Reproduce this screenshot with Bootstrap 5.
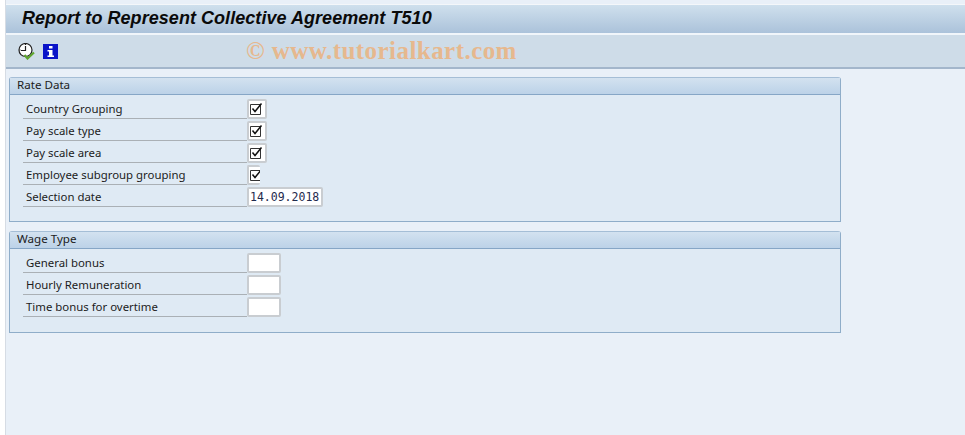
<!DOCTYPE html>
<html lang="en">
<head>
  <meta charset="UTF-8">
  <meta name="viewport" content="width=device-width, initial-scale=1.0">
  <title>Report to Represent Collective Agreement T510</title>
  <link href="https://cdn.jsdelivr.net/npm/bootstrap@5.3.3/dist/css/bootstrap.min.css" rel="stylesheet">
  <style>
    html, body {
      height: 100%;
      overflow: hidden;
    }
    body {
      background-color: #fff;
      font-family: "Noto Sans", sans-serif;
      font-size: 11.4px;
      color: #1c1c1c;
    }
    .sap-shell {
      height: 435px;
      margin-left: 5px;
      padding-top: 4px;
      border-left: 1px solid #d6dce4;
      background-color: #e9f0f8;
    }
    .sap-title {
      height: 31px;
      border-top: 1px solid #f4f7fa;
      border-bottom: 2px solid #f0f5fa;
      background: linear-gradient(#cfe0ed, #abc2da);
      padding-left: 16px;
      font-family: "Liberation Sans", sans-serif;
      font-size: 18px;
      font-weight: bold;
      font-style: italic;
      letter-spacing: .05px;
      line-height: 27px;
      color: #0a0a0a;
    }
    .sap-tools {
      height: 34px;
      background-color: #cedce8;
      border-bottom: 2px solid #a3b6cb;
      padding-left: 12px;
      gap: 8px;
    }
    .sap-mark {
      margin-left: 180px;
      font-family: "Liberation Serif", serif;
      font-size: 25px;
      font-weight: bold;
      letter-spacing: .45px;
      color: #e6b88e;
      white-space: nowrap;
    }
    .sap-content {
      padding: 8px 0 0 3px;
      width: 835px;
    }
    .sap-group {
      border: 1px solid #8fadc9;
      border-top-color: #a5bed6;
      border-radius: 3px 3px 0 0;
      background-color: #dfeaf4;
      margin-bottom: 9px;
    }
    .sap-group-head {
      height: 17px;
      border-bottom: 1px solid #86a6c6;
      background: linear-gradient(#d3e2f0, #bcd2e8);
      padding-left: 7px;
      font-size: 11.6px;
      line-height: 14px;
    }
    .sap-group-body {
      padding: 4px 0 15px 13px;
    }
    .sap-row {
      height: 22px;
    }
    .sap-label {
      flex: 0 0 224px;
      height: 20px;
      padding-left: 3px;
      padding-top: 1px;
      line-height: 17px;
      border-bottom: 1px solid #aab0b5;
    }
    .sap-check, .sap-field {
      height: 20px;
      background-color: #fff;
      border: 2px solid #c9cdd1;
      border-radius: 2px;
    }
    .sap-check {
      width: 20px;
      padding: 1px 0 0 1px;
    }
    .sap-check.narrow {
      width: 13px;
      border-right-width: 0;
      overflow: hidden;
    }
    .sap-field {
      width: 34px;
    }
    .sap-field.date {
      width: 76px;
      font-family: "DejaVu Sans Mono", monospace;
      font-size: 11.5px;
      line-height: 16px;
      padding-left: 1px;
      color: #1f2a4d;
    }
    .sap-tick {
      display: block;
    }
  </style>
</head>
<body>
  <div class="sap-shell">
    <div class="sap-title">Report to Represent Collective Agreement T510</div>
    <div class="sap-tools d-flex align-items-center">
      <svg width="17" height="17" viewBox="0 0 17 17">
        <circle cx="7.500" cy="7" r="6.500" fill="#fff" stroke="#222" stroke-width="1.200"/>
        <path d="M7.500 3v4.500H3M7.500 1v1M7.500 12v1M1.500 7h1" fill="none" stroke="#222" stroke-width="1.200"/>
        <path d="M6.500 12l3 3.500 6.500-6" fill="none" stroke="#5fa52e" stroke-width="2.200"/>
      </svg>
      <svg width="15" height="15" viewBox="0 0 15 15">
        <rect width="15" height="15" fill="#0a14c8"/>
        <rect x="6" y="2" width="3.500" height="2.500" fill="#fff"/>
        <path d="M4.500 6h5v5.500h1.500V13H4.500v-1.500H6V7.500H4.500z" fill="#fff"/>
      </svg>
      <div class="sap-mark">© www.tutorialkart.com</div>
    </div>
    <div class="sap-content">
      <div class="sap-group" style="height:145px">
        <div class="sap-group-head">Rate Data</div>
        <div class="sap-group-body" id="rateRows"></div>
      </div>
      <div class="sap-group" style="height:102px">
        <div class="sap-group-head">Wage Type</div>
        <div class="sap-group-body" id="wageRows"></div>
      </div>
    </div>
  </div>

  <script>
    const TICK = '<svg class="sap-tick" width="13" height="13" viewBox="0 0 13 13"><path d="M.5 2.500h10v10H.5z" fill="none" stroke="#333"/><path d="M2.500 6.500l2.500 3 6.500-8" fill="none" stroke="#111" stroke-width="1.500"/></svg>';

    const rate = [
      ['Country Grouping', 'check'],
      ['Pay scale type', 'check'],
      ['Pay scale area', 'check'],
      ['Employee subgroup grouping', 'narrow'],
      ['Selection date', 'date']
    ];
    const wage = ['General bonus', 'Hourly Remuneration', 'Time bonus for overtime'];

    function fila(texto, control) {
      return `<div class="sap-row d-flex align-items-start"><div class="sap-label">${texto}</div>${control}</div>`;
    }

    function controlDe(tipo) {
      if (tipo === 'check') return `<div class="sap-check">${TICK}</div>`;
      if (tipo === 'narrow') return `<div class="sap-check narrow">${TICK}</div>`;
      return '<div class="sap-field date">14.09.2018</div>';
    }

    document.getElementById('rateRows').innerHTML = rate.map(r => fila(r[0], controlDe(r[1]))).join('');
    document.getElementById('wageRows').innerHTML = wage.map(t => fila(t, '<div class="sap-field"></div>')).join('');
  </script>
  <script src="https://cdn.jsdelivr.net/npm/bootstrap@5.3.3/dist/js/bootstrap.bundle.min.js"></script>
</body>
</html>
